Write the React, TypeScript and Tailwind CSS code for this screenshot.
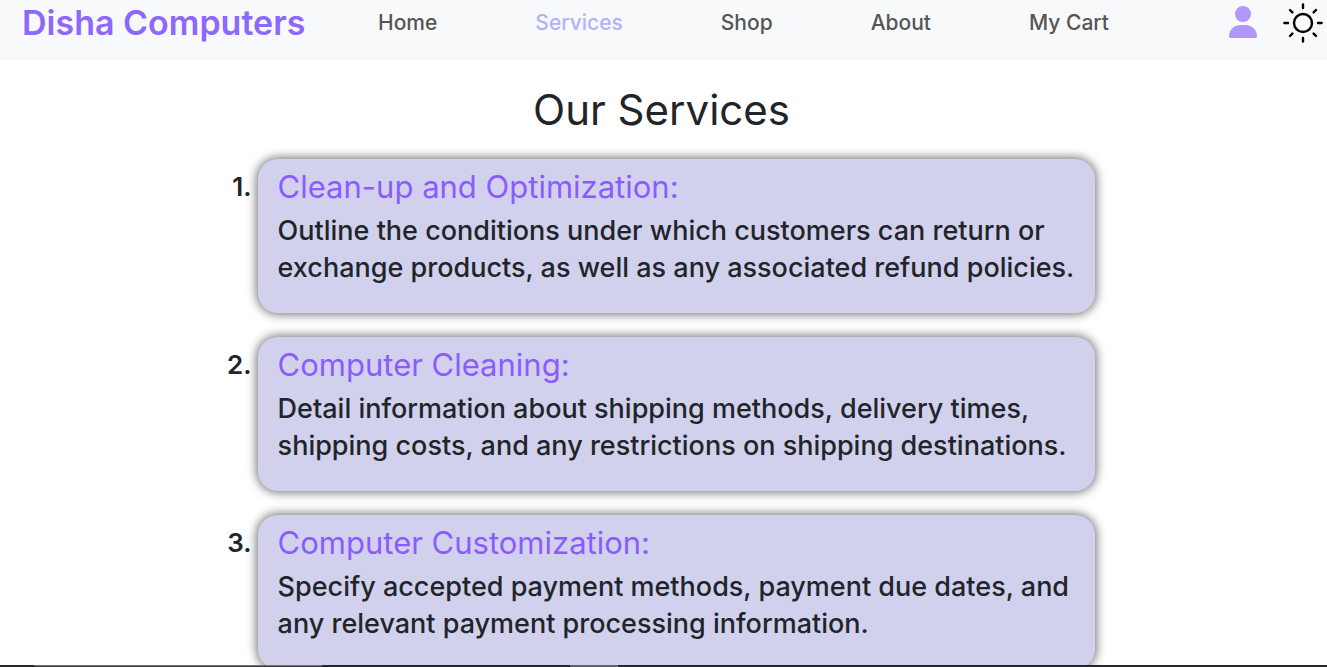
import { FaUser } from "react-icons/fa6";

const links = [
  { label: "Home" },
  { label: "Services", active: true },
  { label: "Shop" },
  { label: "About" },
  { label: "My Cart" },
];

const services = [
  {
    title: "Clean-up and Optimization:",
    text: "Outline the conditions under which customers can return or exchange products, as well as any associated refund policies.",
  },
  {
    title: "Computer Cleaning:",
    text: "Detail information about shipping methods, delivery times, shipping costs, and any restrictions on shipping destinations.",
  },
  {
    title: "Computer Customization:",
    text: "Specify accepted payment methods, payment due dates, and any relevant payment processing information.",
  },
];

function SunIcon() {
  return (
    <svg viewBox="0 0 40 40" className="size-10" fill="none" stroke="#000" strokeWidth="2.4" aria-hidden="true">
      <circle cx="20" cy="20" r="9" />
      <path
        strokeLinecap="round"
        d="M20 1.4v3.6M20 35v3.6M1.4 20h3.6M35 20h3.6M7 7l2.4 2.4M30.6 30.6l2.4 2.4M7 33l2.4-2.4M30.6 9.4l2.4-2.4"
      />
    </svg>
  );
}

export default function App() {
  return (
    <div className="h-screen overflow-hidden bg-white font-['Inter',sans-serif] text-[#212529]">
      <header className="flex h-[60px] items-start bg-[#f8f9fb] pr-1 pl-[22px]">
        <a href="#" className="w-[356px] shrink-0 pt-[3px] text-[34px] leading-10 font-semibold text-[#8c68ff]">
          Disha Computers
        </a>
        <nav className="flex gap-[98px] pt-[11px] text-[21px] leading-6 font-medium whitespace-nowrap text-[#555]">
          {links.map((l) => (
            <a key={l.label} href="#" className={l.active ? "text-[#b3b0ff]" : ""}>
              {l.label}
            </a>
          ))}
        </nav>
        <div className="ml-auto flex items-start gap-[26px] pt-[3px]">
          <button aria-label="Account" className="pt-[3px] text-[#b197fc]">
            <FaUser className="h-8 w-7" />
          </button>
          <button aria-label="Toggle theme">
            <SunIcon />
          </button>
        </div>
      </header>

      <main>
        <h1 className="pt-[26px] pr-1 text-center text-[42px] leading-[48px]">Our Services</h1>
        <ol className="mx-auto mt-[25px] flex w-[66%] flex-col gap-6 pr-1.5">
          {services.map((s, i) => (
            <li key={s.title} className="flex">
              <span className="w-8 shrink-0 pt-[9px] pr-1.5 text-right text-[26px] leading-[38px] font-semibold">{i + 1}.</span>
              <section className="min-w-0 flex-1 rounded-[20px] bg-[#d2d1ed] pt-[11px] pr-4 pb-[27px] pl-5 shadow-[0_0_10px_2px_rgba(0,0,0,0.5)]">
                <h2 className="mb-2 text-[31px] leading-[34px] text-[#8a5cff]">{s.title}</h2>
                <p className="text-[27px] leading-[37px] font-medium">{s.text}</p>
              </section>
            </li>
          ))}
        </ol>
      </main>

      <div className="fixed inset-x-0 bottom-0 flex h-0.5 bg-[#25262b]">
        <div className="ml-[34px] h-full w-[288px] border-t border-[#747476] bg-[#3a3a3d]" />
        <div className="ml-[248px] h-full w-12 bg-[#626366]" />
      </div>
    </div>
  );
}
